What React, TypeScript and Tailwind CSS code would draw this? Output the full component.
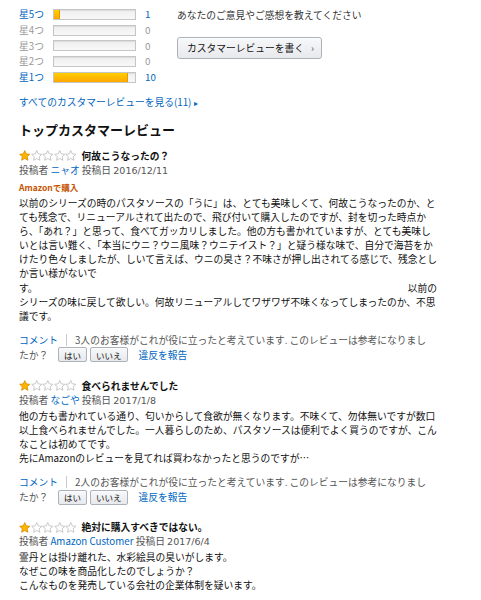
import React from "react";

const FONT = { fontFamily: '"Noto Sans CJK JP", "Noto Sans", sans-serif' };
const LATIN = { fontFamily: '"DejaVu Sans", "Noto Sans CJK JP", sans-serif' };

function Star({ filled }: { filled: boolean }) {
  return (
    <svg width="11.5" height="11" viewBox="0 0 24 23" className="block">
      <path
        d="M12 1.2l3.2 6.9 7.4.9-5.5 5.1 1.5 7.4L12 17.8l-6.6 3.7 1.5-7.4L1.4 9l7.4-.9z"
        fill={filled ? "#ffb400" : "#fff"}
        stroke={filled ? "#d08a00" : "#b8b8b8"}
        strokeWidth="1.6"
        strokeLinejoin="round"
      />
    </svg>
  );
}

function Stars() {
  return (
    <div className="flex items-center">
      <Star filled />
      <Star filled={false} />
      <Star filled={false} />
      <Star filled={false} />
      <Star filled={false} />
    </div>
  );
}

function RatingRow({ label, pct, count, active }: { label: string; pct: number; count: string; active: boolean }) {
  return (
    <div className="flex h-[15.6px] items-center">
      <span className={`w-[34px] ${active ? "text-[#0066c0]" : "text-[#999]"}`}>{label}</span>
      <div className="h-[11px] w-[83px] border border-[#c5c5c5] bg-gradient-to-b from-[#eeeeee] to-[#f8f8f8] shadow-[inset_0_1px_1px_rgba(0,0,0,0.08)]">
        {pct > 0 && (
          <div
            className="h-full border-r border-[#e09c00] bg-gradient-to-b from-[#ffce00] to-[#ffa700]"
            style={{ width: `${pct}%` }}
          />
        )}
      </div>
      <span className={`ml-[9px] ${active ? "text-[#0066c0]" : "text-[#999]"}`}>{count}</span>
    </div>
  );
}

function SmallBtn({ children }: { children: React.ReactNode }) {
  return (
    <span className="inline-flex h-[15px] items-center rounded-[2px] border border-[#adb1b8] bg-gradient-to-b from-[#f7f8fa] to-[#e7e9ec] px-[5px] text-[8.5px] leading-none text-[#111] shadow-[0_1px_0_rgba(255,255,255,0.6)_inset]">
      {children}
    </span>
  );
}

function Footer({ n }: { n: string }) {
  return (
    <div className="text-[#555]">
      <div className="flex h-[14px] items-center">
        <span className="text-[#0066c0]">コメント</span>
        <span className="mx-[8px] h-[12px] w-px bg-[#ccc]" />
        <span>{n}人のお客様がこれが役に立ったと考えています. このレビューは参考になりまし</span>
      </div>
      <div className="flex h-[16px] items-center">
        <span className="w-[39px]">たか？</span>
        <SmallBtn>はい</SmallBtn>
        <span className="w-[3px]" />
        <SmallBtn>いいえ</SmallBtn>
        <span className="ml-[11px] text-[#0066c0]">違反を報告</span>
      </div>
    </div>
  );
}

function ReviewHead({ title, name, date }: { title: string; name: string; date: string }) {
  return (
    <>
      <div className="flex h-[14px] items-center">
        <Stars />
        <span className="ml-[5px] font-bold text-[#111]">{title}</span>
      </div>
      <div className="h-[14px] leading-[14px] text-[#555]">
        投稿者 <span className="text-[#0066c0]">{name}</span> 投稿日{" "}
        <span className="text-[9.5px]" style={LATIN}>
          {date}
        </span>
      </div>
    </>
  );
}

function Lines({ lines }: { lines: React.ReactNode[] }) {
  return (
    <div className="text-[#111]">
      {lines.map((l, i) => (
        <div key={i} className="h-[14.1px] whitespace-nowrap leading-[14.1px]">
          {l}
        </div>
      ))}
    </div>
  );
}

export default function App() {
  return (
    <div className="min-h-[600px] w-[481px] bg-white pl-[19px] text-[9.75px]" style={FONT}>
      <div className="flex pt-[7px]">
        <div className="w-[158px]">
          <RatingRow label="星5つ" pct={8} count="1" active />
          <RatingRow label="星4つ" pct={0} count="0" active={false} />
          <RatingRow label="星3つ" pct={0} count="0" active={false} />
          <RatingRow label="星2つ" pct={0} count="0" active={false} />
          <RatingRow label="星1つ" pct={91} count="10" active />
        </div>
        <div>
          <div className="h-[16px] leading-[16px] text-[#333]">あなたのご意見やご感想を教えてください</div>
          <div className="mt-[14px] flex h-[22px] w-[145px] items-center rounded-[3px] border border-[#adb1b8] bg-gradient-to-b from-[#f7f8fa] to-[#e7e9ec] pl-[9px] text-[#111] shadow-[0_1px_0_rgba(255,255,255,0.6)_inset]">
            カスタマーレビューを書く<span className="ml-[7px] text-[#555]">›</span>
          </div>
        </div>
      </div>

      <div className="mt-[10px] h-[14px] leading-[14px] text-[#0066c0]">
        すべてのカスタマーレビューを見る(11)<span className="ml-[3px] text-[8px]">▸</span>
      </div>

      <div className="mt-[12px] h-[18px] text-[13px] font-bold leading-[18px] text-[#111]">
        トップカスタマーレビュー
      </div>

      {/* Review 1 */}
      <div className="mt-[10px]">
        <ReviewHead title="何故こうなったの？" name="ニャオ" date="2016/12/11" />
        <div className="mt-[3px] h-[14px] text-[8.5px] font-bold leading-[14px] text-[#c45500]">Amazonで購入</div>
        <div className="mt-[2px]">
          <Lines
            lines={[
              "以前のシリーズの時のパスタソースの「うに」は、とても美味しくて、何故こうなったのか、と",
              "ても残念で、リニューアルされて出たので、飛び付いて購入したのですが、封を切った時点か",
              "ら、「あれ？」と思って、食べてガッカリしました。他の方も書かれていますが、とても美味し",
              "いとは言い難く、「本当にウニ？ウニ風味？ウニテイスト？」と疑う様な味で、自分で海苔をか",
              "けたり色々しましたが、しいて言えば、ウニの臭さ？不味さが押し出されてる感じで、残念とし",
              "か言い様がないで",
              <div className="flex w-[418px] justify-between">
                <span>す。</span>
                <span>以前の</span>
              </div>,
              "シリーズの味に戻して欲しい。何故リニューアルしてワザワザ不味くなってしまったのか、不思",
              "議です。",
            ]}
          />
        </div>
        <div className="mt-[10px]">
          <Footer n="3" />
        </div>
      </div>

      {/* Review 2 */}
      <div className="mt-[16px]">
        <ReviewHead title="食べられませんでした" name="なごや" date="2017/1/8" />
        <div className="mt-[2px]">
          <Lines
            lines={[
              "他の方も書かれている通り、匂いからして食欲が無くなります。不味くて、勿体無いですが数口",
              "以上食べられませんでした。一人暮らしのため、パスタソースは便利でよく買うのですが、こん",
              "なことは初めてです。",
              "先にAmazonのレビューを見てれば買わなかったと思うのですが…",
            ]}
          />
        </div>
        <div className="mt-[10px]">
          <Footer n="2" />
        </div>
      </div>

      {/* Review 3 */}
      <div className="mt-[15px]">
        <ReviewHead title="絶対に購入すべきではない。" name="Amazon Customer" date="2017/6/4" />
        <div className="mt-[2px]">
          <Lines
            lines={[
              "霊丹とは掛け離れた、水彩絵具の臭いがします。",
              "なぜこの味を商品化したのでしょうか？",
              "こんなものを発売している会社の企業体制を疑います。",
            ]}
          />
        </div>
      </div>
    </div>
  );
}
